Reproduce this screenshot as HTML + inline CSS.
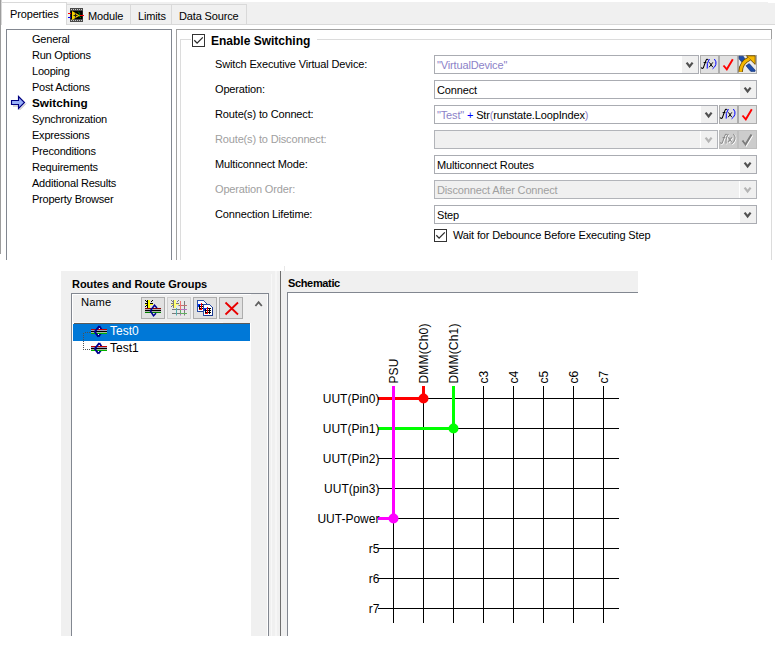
<!DOCTYPE html>
<html><head><meta charset="utf-8">
<style>
*{box-sizing:border-box;margin:0;padding:0}
html,body{width:775px;height:647px;overflow:hidden;background:#fff}
body{position:relative;font-family:"Liberation Sans",sans-serif;font-size:11px;color:#000;letter-spacing:-0.15px}
.a{position:absolute}
.t{position:absolute;white-space:nowrap;line-height:16px;height:16px}
.b{font-weight:bold}
.hl{position:absolute;background:#d9d9d9}
.cb{position:absolute;border:1px solid #aaacb2;background:#fff}
.dd{position:absolute;top:0;bottom:0;right:0;width:16px;background:#f0f0f0}
.chev{position:absolute;left:4px;top:5px}
.btn{position:absolute;border:1px solid #adadad;background:#e1e1e1;width:19px;height:19px}
.sl{font-size:12px;letter-spacing:0}
.chk{position:absolute;width:13px;height:13px;border:1px solid #333;background:#fff}
</style></head><body>

<!-- left edge line -->
<div class="a" style="left:0;top:0;width:1px;height:254px;background:#9d9d9d"></div>
<div class="a" style="left:1px;top:0;width:1px;height:254px;background:#d4d4d4"></div>

<!-- tab strip -->
<div class="a" style="left:1px;top:2px;width:774px;height:23px;background:#f0f0f0"></div>
<div class="a" style="left:1px;top:24px;width:774px;height:1px;background:#d9d9d9"></div>
<div class="a" style="left:768px;top:2px;width:7px;height:1px;background:#fff"></div>
<!-- inactive tabs -->
<div class="a" style="left:66px;top:4px;width:181px;height:21px;border:1px solid #d9d9d9;background:#f0f0f0"></div>
<div class="a" style="left:130px;top:4px;width:1px;height:20px;background:#d9d9d9"></div>
<div class="a" style="left:171px;top:4px;width:1px;height:20px;background:#d9d9d9"></div>
<!-- active tab -->
<div class="a" style="left:1px;top:2px;width:66px;height:24px;border:1px solid #d9d9d9;border-bottom:none;background:#fff"></div>
<div class="t" style="left:10px;top:6px">Properties</div>
<div class="t" style="left:88px;top:8px">Module</div>
<div class="t" style="left:138px;top:8px">Limits</div>
<div class="t" style="left:179px;top:8px">Data Source</div>

<!-- tab page white -->
<div class="a" style="left:1px;top:25px;width:774px;height:235px;background:#fff"></div>

<!-- left list box -->
<div class="a" style="left:6px;top:29px;width:166px;height:231px;border:1px solid #828790;border-bottom:none"></div>
<div class="t" style="left:32px;top:31px;letter-spacing:-0.22px">General</div>
<div class="t" style="left:32px;top:47px;letter-spacing:-0.22px">Run Options</div>
<div class="t" style="left:32px;top:63px;letter-spacing:-0.22px">Looping</div>
<div class="t" style="left:32px;top:79px;letter-spacing:-0.22px">Post Actions</div>
<div class="t b" style="left:32px;top:95px;font-size:11.8px;letter-spacing:0">Switching</div>
<div class="t" style="left:32px;top:111px;letter-spacing:-0.22px">Synchronization</div>
<div class="t" style="left:32px;top:127px;letter-spacing:-0.22px">Expressions</div>
<div class="t" style="left:32px;top:143px;letter-spacing:-0.22px">Preconditions</div>
<div class="t" style="left:32px;top:159px;letter-spacing:-0.22px">Requirements</div>
<div class="t" style="left:32px;top:175px;letter-spacing:-0.22px">Additional Results</div>
<div class="t" style="left:32px;top:191px;letter-spacing:-0.22px">Property Browser</div>

<!-- right panel -->
<div class="a" style="left:176px;top:29px;width:596px;height:231px;border:1px solid #a0a0a0;border-bottom:none"></div>
<div class="a" style="left:180px;top:39px;width:592px;height:221px;border:1px solid #dcdcdc;border-bottom:none"></div>
<div class="a" style="left:191px;top:33px;width:126px;height:14px;background:#fff"></div>
<div class="chk" style="left:192px;top:34px"></div>
<div class="t b" style="left:211px;top:33px;font-size:12px;letter-spacing:0">Enable Switching</div>

<div class="t" style="left:215px;top:56px">Switch Executive Virtual Device:</div>
<div class="t" style="left:215px;top:81px">Operation:</div>
<div class="t" style="left:215px;top:106px">Route(s) to Connect:</div>
<div class="t" style="left:215px;top:131px;color:#a0a0a0">Route(s) to Disconnect:</div>
<div class="t" style="left:215px;top:156px">Multiconnect Mode:</div>
<div class="t" style="left:215px;top:181px;color:#a0a0a0">Operation Order:</div>
<div class="t" style="left:215px;top:206px">Connection Lifetime:</div>

<!-- combos -->
<div class="cb" style="left:434px;top:55px;width:265px;height:19px"><div class="dd"></div><div class="t" style="left:2px;top:1px;color:#8c82c8">"VirtualDevice"</div></div>
<div class="cb" style="left:434px;top:80px;width:323px;height:19px"><div class="dd"></div><div class="t" style="left:2px;top:1px">Connect</div></div>
<div class="cb" style="left:434px;top:105px;width:284px;height:19px"><div class="dd"></div><div class="t" style="left:2px;top:1px"><span style="color:#8c82c8">"Test"</span> <span style="color:#0000ff">+</span> Str<span style="color:#8c82c8">(</span>runstate.LoopIndex<span style="color:#8c82c8">)</span></div></div>
<div class="cb" style="left:434px;top:130px;width:284px;height:19px;background:#f0f0f0;border-color:#b2b4b9"><div class="dd" style="background:#f0f0f0;border-left:1px solid #fff;width:17px"></div></div>
<div class="cb" style="left:434px;top:155px;width:323px;height:19px"><div class="dd"></div><div class="t" style="left:2px;top:1px">Multiconnect Routes</div></div>
<div class="cb" style="left:434px;top:180px;width:323px;height:19px;background:#f0f0f0;border-color:#b2b4b9"><div class="dd" style="background:#f0f0f0;border-left:1px solid #fff;width:17px"></div><div class="t" style="left:2px;top:1px;color:#a0a0a0">Disconnect After Connect</div></div>
<div class="cb" style="left:434px;top:205px;width:323px;height:19px"><div class="dd"></div><div class="t" style="left:2px;top:1px">Step</div></div>

<div class="btn" style="left:700px;top:55px"></div>
<div class="btn" style="left:719px;top:55px"></div>
<div class="btn" style="left:738px;top:55px"></div>
<div class="btn" style="left:719px;top:105px"></div>
<div class="btn" style="left:738px;top:105px"></div>
<div class="btn" style="left:719px;top:130px;background:#ccc;border-color:#bfbfbf"></div>
<div class="btn" style="left:738px;top:130px;background:#ccc;border-color:#bfbfbf"></div>

<div class="chk" style="left:434px;top:229px"></div>
<div class="t" style="left:453px;top:227px">Wait for Debounce Before Executing Step</div>

<!-- ============ bottom ============ -->
<div class="a" style="left:61px;top:271px;width:577px;height:365px;background:#f0f0f0"></div>
<div class="t b" style="left:72px;top:276px;letter-spacing:-0.05px">Routes and Route Groups</div>
<div class="a" style="left:71px;top:293px;width:198px;height:343px;border:1px solid #828790;border-bottom:none;background:#fff"></div>
<div class="a" style="left:73px;top:295px;width:178px;height:28px;background:#f0f0f0"></div>
<div class="a" style="left:251px;top:294px;width:16px;height:342px;background:#f0f0f0"></div>
<div class="t" style="left:81px;top:294px;font-size:11.2px;letter-spacing:0.1px">Name</div>
<div class="btn" style="left:141px;top:297px;width:24px;height:22px"></div>
<div class="btn" style="left:167px;top:297px;width:24px;height:22px;background:#e8e8e8;border-color:#cfcfcf"></div>
<div class="btn" style="left:193px;top:297px;width:24px;height:22px"></div>
<div class="btn" style="left:219px;top:297px;width:24px;height:22px"></div>
<div class="a" style="left:73px;top:322px;width:150px;height:1px;background:#fafafa"></div>
<div class="a" style="left:74px;top:323px;width:176px;height:1px;background:#5a5a5a"></div>
<div class="a" style="left:73px;top:324px;width:177px;height:17px;background:#0078d7"></div>
<div class="t" style="left:110px;top:323px;color:#fff;font-size:12px;letter-spacing:0">Test0</div>
<div class="t" style="left:110px;top:340px;font-size:12px;letter-spacing:0">Test1</div>

<div class="a" style="left:268px;top:293px;width:1px;height:343px;background:#828790"></div>
<div class="a" style="left:280px;top:271px;width:1px;height:365px;background:#828790"></div>
<div class="a" style="left:281px;top:271px;width:357px;height:365px;background:#f0f0f0"></div>
<div class="t b" style="left:288px;top:275px;letter-spacing:-0.35px">Schematic</div>
<div class="a" style="left:284px;top:266px;width:1px;height:5px;background:#e8e8e8"></div>
<div class="a" style="left:271px;top:274px;width:1px;height:362px;background:#f8f8f8"></div>
<div class="a" style="left:275px;top:271px;width:2px;height:365px;background:#f6f6f6"></div>
<div class="a" style="left:280px;top:271px;width:1px;height:365px;background:#6f6f6f"></div>
<div class="a" style="left:287px;top:292px;width:351px;height:344px;border-left:1px solid #828790;border-top:1px solid #828790;background:#fff"></div>

<svg class="a" style="left:0;top:0" width="775" height="647" shape-rendering="crispEdges">
<line x1="393.5" y1="386" x2="393.5" y2="623" stroke="#000" stroke-width="1"/>
<line x1="423.5" y1="386" x2="423.5" y2="623" stroke="#000" stroke-width="1"/>
<line x1="453.5" y1="386" x2="453.5" y2="623" stroke="#000" stroke-width="1"/>
<line x1="483.5" y1="386" x2="483.5" y2="623" stroke="#000" stroke-width="1"/>
<line x1="513.5" y1="386" x2="513.5" y2="623" stroke="#000" stroke-width="1"/>
<line x1="543.5" y1="386" x2="543.5" y2="623" stroke="#000" stroke-width="1"/>
<line x1="573.5" y1="386" x2="573.5" y2="623" stroke="#000" stroke-width="1"/>
<line x1="603.5" y1="386" x2="603.5" y2="623" stroke="#000" stroke-width="1"/>
<line x1="378" y1="398.5" x2="619" y2="398.5" stroke="#000" stroke-width="1"/>
<line x1="378" y1="428.5" x2="619" y2="428.5" stroke="#000" stroke-width="1"/>
<line x1="378" y1="458.5" x2="619" y2="458.5" stroke="#000" stroke-width="1"/>
<line x1="378" y1="488.5" x2="619" y2="488.5" stroke="#000" stroke-width="1"/>
<line x1="378" y1="518.5" x2="619" y2="518.5" stroke="#000" stroke-width="1"/>
<line x1="378" y1="548.5" x2="619" y2="548.5" stroke="#000" stroke-width="1"/>
<line x1="378" y1="578.5" x2="619" y2="578.5" stroke="#000" stroke-width="1"/>
<line x1="378" y1="608.5" x2="619" y2="608.5" stroke="#000" stroke-width="1"/>
</svg>
<svg class="a" style="left:0;top:0" width="775" height="647">
<path d="M378 398.5H423.5V386" fill="none" stroke="#ff0000" stroke-width="3" shape-rendering="crispEdges"/>
<path d="M378 428.5H453.5V386" fill="none" stroke="#00ff00" stroke-width="3" shape-rendering="crispEdges"/>
<path d="M378 518.5H393.5V386" fill="none" stroke="#ff00ff" stroke-width="3" shape-rendering="crispEdges"/>
<circle cx="423.5" cy="398.5" r="5" fill="#ff0000"/>
<circle cx="453.5" cy="428.5" r="5" fill="#00ff00"/>
<circle cx="393.5" cy="518.5" r="5" fill="#ff00ff"/>
<text transform="translate(398.2 383.6) rotate(-90)" font-size="12" letter-spacing="0.2">PSU</text>
<text transform="translate(428.2 383.6) rotate(-90)" font-size="12" letter-spacing="0.2">DMM(Ch0)</text>
<text transform="translate(458.2 383.6) rotate(-90)" font-size="12" letter-spacing="0.2">DMM(Ch1)</text>
<text transform="translate(488.2 383.6) rotate(-90)" font-size="12" letter-spacing="0.2">c3</text>
<text transform="translate(518.2 383.6) rotate(-90)" font-size="12" letter-spacing="0.2">c4</text>
<text transform="translate(548.2 383.6) rotate(-90)" font-size="12" letter-spacing="0.2">c5</text>
<text transform="translate(578.2 383.6) rotate(-90)" font-size="12" letter-spacing="0.2">c6</text>
<text transform="translate(608.2 383.6) rotate(-90)" font-size="12" letter-spacing="0.2">c7</text>
</svg>
<div class="t sl" style="right:395.6px;top:390.8px">UUT(Pin0)</div>
<div class="t sl" style="right:395.6px;top:420.8px">UUT(Pin1)</div>
<div class="t sl" style="right:395.6px;top:450.8px">UUT(Pin2)</div>
<div class="t sl" style="right:395.6px;top:480.8px">UUT(pin3)</div>
<div class="t sl" style="right:395.6px;top:510.8px">UUT-Power</div>
<div class="t sl" style="right:395.6px;top:540.8px">r5</div>
<div class="t sl" style="right:395.6px;top:570.8px">r6</div>
<div class="t sl" style="right:395.6px;top:600.8px">r7</div>

<svg class="a" style="left:0;top:0" width="775" height="647">
<!-- module tab icon -->
<g>
<rect x="70" y="8" width="13" height="14" fill="#4a4a4a"/>
<rect x="70.5" y="11" width="12" height="8" fill="#000"/>
<g fill="#c8c8c8"><rect x="71" y="9" width="1" height="1"/><rect x="73" y="9" width="1" height="1"/><rect x="75" y="9" width="1" height="1"/><rect x="77" y="9" width="1" height="1"/><rect x="79" y="9" width="1" height="1"/><rect x="81" y="9" width="1" height="1"/>
<rect x="71" y="20" width="1" height="1"/><rect x="73" y="20" width="1" height="1"/><rect x="75" y="20" width="1" height="1"/><rect x="77" y="20" width="1" height="1"/><rect x="79" y="20" width="1" height="1"/><rect x="81" y="20" width="1" height="1"/></g>
<path d="M78 11.5l2 2.5-1 2 2 2" stroke="#008000" fill="none" stroke-width="1"/>
<path d="M72 11V20L80 15.5Z" fill="#f4d000"/>
<path d="M75.5 13.5v4M73.5 15.5h4" stroke="#222" stroke-width="1.2"/>
<path d="M68 13.5h3" stroke="#f00" stroke-width="1"/>
<path d="M68 17.5h3" stroke="#00f" stroke-width="1"/>
<path d="M80 15.5h4" stroke="#f00" stroke-width="1"/>
</g>
<!-- switching arrow -->
<path d="M12.5 105.5H19V104.5M19 109.5L25.5 103" stroke="#808080" stroke-width="1" fill="none" opacity="0.6" transform="translate(0.5 0.5)"/>
<path d="M11.5 100.5H18.5V96.5L24.5 102.5L18.5 108.5V104.5H11.5Z" fill="#98b0f8" stroke="#000080" stroke-width="1.15" stroke-linejoin="miter"/>
<!-- fx button row1 -->
<g>
<path d="M701.2 67.4Q702 69.4 703.4 67.6L706 60.4Q706.8 58.6 708.2 59.6" stroke="#000" stroke-width="1.1" fill="none"/>
<path d="M703.6 62.6H706.4" stroke="#000" stroke-width="1"/>
<path d="M709.4 59Q706.4 63.2 707.2 68.6" stroke="#0000ff" stroke-width="1" fill="none"/>
<path d="M709.4 62.4L712.8 67.2M712.8 62.4L709.2 67.2" stroke="#000" stroke-width="1"/>
<path d="M714.4 59Q716.8 61.8 715.8 64.6Q715 67.2 712.6 68.8" stroke="#0000ff" stroke-width="1" fill="none"/>
</g>
<g transform="translate(19 50)">
<path d="M701.2 67.4Q702 69.4 703.4 67.6L706 60.4Q706.8 58.6 708.2 59.6" stroke="#000" stroke-width="1.1" fill="none"/>
<path d="M703.6 62.6H706.4" stroke="#000" stroke-width="1"/>
<path d="M709.4 59Q706.4 63.2 707.2 68.6" stroke="#0000ff" stroke-width="1" fill="none"/>
<path d="M709.4 62.4L712.8 67.2M712.8 62.4L709.2 67.2" stroke="#000" stroke-width="1"/>
<path d="M714.4 59Q716.8 61.8 715.8 64.6Q715 67.2 712.6 68.8" stroke="#0000ff" stroke-width="1" fill="none"/>
</g>
<!-- red checks -->
<path d="M723.5 65.5L726.8 69.3L732.8 59.2" stroke="#ff0000" stroke-width="1.9" fill="none"/>
<path d="M742.5 115.5L745.8 119.3L751.8 109.2" stroke="#ff0000" stroke-width="1.9" fill="none"/>
<!-- wizard icon -->
<g>
<rect x="739" y="56" width="17" height="17" fill="#eaeaea"/>
<path d="M739 56.2L743.2 56.2L745.8 60.2L742.2 62.6L739.2 59Z" fill="#1f4da8" stroke="#0a2a70" stroke-width="0.6"/>
<path d="M746 65.8L749.2 63.6L755.2 70.2L755 71.4L750.8 71.4Z" fill="#1f4da8" stroke="#0a2a70" stroke-width="0.6"/>
<path d="M740.6 71.8A15 15 0 0 1 749.6 58.6" stroke="#6a4800" stroke-width="4.4" fill="none"/>
<path d="M746.4 55.8L755.2 55.8L755.2 64.4Z" fill="#f6b800" stroke="#6a4800" stroke-width="0.9" stroke-linejoin="round"/>
<path d="M740.6 71.8A15 15 0 0 1 749.6 58.6" stroke="#f6b800" stroke-width="2.8" fill="none"/>
</g>
<!-- disabled fx / check -->
<g fill="none">
<path d="M701.2 67.4Q702 69.4 703.4 67.6L706 60.4Q706.8 58.6 708.2 59.6M703.6 62.6H706.4M709.4 59Q706.4 63.2 707.2 68.6M709.4 62.4L712.8 67.2M712.8 62.4L709.2 67.2M714.4 59Q716.8 61.8 715.8 64.6Q715 67.2 712.6 68.8" stroke="#fff" stroke-width="1.1" transform="translate(19.7 75.7)"/>
<path d="M701.2 67.4Q702 69.4 703.4 67.6L706 60.4Q706.8 58.6 708.2 59.6M703.6 62.6H706.4M709.4 59Q706.4 63.2 707.2 68.6M709.4 62.4L712.8 67.2M712.8 62.4L709.2 67.2M714.4 59Q716.8 61.8 715.8 64.6Q715 67.2 712.6 68.8" stroke="#8c8c8c" stroke-width="1.1" transform="translate(19 75)"/>
<path d="M742.5 140.5L745.5 144.5L751.5 134.5" stroke="#fff" stroke-width="2" transform="translate(0.8 0.8)"/>
<path d="M742.5 140.5L745.5 144.5L751.5 134.5" stroke="#7c7c7c" stroke-width="2"/>
</g>
<!-- combo chevrons -->
<g fill="none" stroke="#505050" stroke-width="2.2">
<path d="M686.6 62.6L689.6 66.4L692.6 62.6"/>
<path d="M744.6 87.6L747.6 91.4L750.6 87.6"/>
<path d="M705.6 112.6L708.6 116.4L711.6 112.6"/>
<path d="M744.6 162.6L747.6 166.4L750.6 162.6"/>
<path d="M744.6 212.6L747.6 216.4L750.6 212.6"/>
</g>
<g fill="none" stroke="#b4b4b4" stroke-width="2.2">
<path d="M705.6 137.6L708.6 141.4L711.6 137.6"/>
<path d="M744.6 187.6L747.6 191.4L750.6 187.6"/>
</g>
<!-- check marks in checkboxes -->
<path d="M194.3 40.3L197.1 43.1L202.8 37.4" stroke="#2a2a2a" stroke-width="1.3" fill="none"/>
<path d="M436.3 235.3L439.1 238.1L444.8 232.4" stroke="#2a2a2a" stroke-width="1.3" fill="none"/>
<!-- scrollbar up chevron -->
<path d="M255.4 306L258.6 302.2L261.8 306" stroke="#606060" stroke-width="1.8" fill="none"/>
<!-- toolbar button 1: add route -->
<g shape-rendering="crispEdges">
<rect x="148" y="300" width="2" height="8" fill="#ffff00"/>
<rect x="145" y="303" width="8" height="2" fill="#ffff00"/>
<rect x="147" y="300" width="1" height="8" fill="#000"/>
<rect x="145" y="303" width="2" height="1" fill="#000"/>
<rect x="150" y="303" width="3" height="1" fill="#000"/>
<rect x="145" y="300" width="1" height="1" fill="#000"/><rect x="146" y="301" width="1" height="1" fill="#000"/>
<rect x="152" y="300" width="1" height="1" fill="#000"/><rect x="151" y="301" width="1" height="1" fill="#000"/>
<rect x="145" y="306" width="1" height="1" fill="#000"/><rect x="146" y="305" width="1" height="1" fill="#000"/>
<rect x="145" y="308" width="16" height="1" fill="#8b0000"/>
<rect x="145" y="309" width="16" height="1" fill="#b0b0b0"/>
<rect x="145" y="310" width="16" height="1" fill="#000"/>
<rect x="145" y="311" width="16" height="1" fill="#b0b0b0"/>
<rect x="145" y="312" width="16" height="1" fill="#008000"/>
</g>
<path d="M157 308L154.5 305.2L150.3 310.7L153.5 315.8L156 313.2" stroke="#000090" stroke-width="1.5" fill="none"/>
<!-- toolbar button 2: disabled grid -->
<g stroke-width="1">
<g shape-rendering="crispEdges">
<rect x="174" y="300" width="2" height="8" fill="#ffff70"/>
<rect x="171" y="303" width="8" height="2" fill="#ffff70"/>
<rect x="173" y="300" width="1" height="8" fill="#7a7a7a"/>
<rect x="171" y="303" width="2" height="1" fill="#7a7a7a"/>
<rect x="176" y="303" width="3" height="1" fill="#7a7a7a"/>
<rect x="171" y="300" width="1" height="1" fill="#7a7a7a"/><rect x="172" y="301" width="1" height="1" fill="#7a7a7a"/>
<rect x="178" y="300" width="1" height="1" fill="#7a7a7a"/><rect x="177" y="301" width="1" height="1" fill="#7a7a7a"/>
<rect x="171" y="306" width="1" height="1" fill="#7a7a7a"/><rect x="172" y="305" width="1" height="1" fill="#7a7a7a"/>
</g>
<path d="M184.5 301v14.5M178.5 305.5h8.5M172 309.5h8M172 313.5h8" stroke="#7a7a7a"/>
<path d="M180.5 301v9" stroke="#f07070"/>
<path d="M181 305.5h6" stroke="#c07070"/>
<path d="M180.5 310v5.5M181 309.5h6" stroke="#b070c0"/>
<path d="M176.5 308v7.5" stroke="#50b0b0"/>
<path d="M180.5 313.5h6.5M180.5 310v3.5" stroke="#60b060"/>
</g>
<!-- toolbar button 3: copy -->
<g shape-rendering="crispEdges">
<path d="M197.5 300.5h6l2.5 2.5v8.5h-8.5Z" fill="#fff" stroke="#2a4fa8" stroke-width="1"/>
<path d="M198.5 311.5h8M206.5 303v8.5" stroke="#1a3a90" stroke-width="1"/>
<rect x="199" y="304" width="2" height="1" fill="#000"/>
<rect x="199" y="305" width="1" height="1" fill="#000"/>
<rect x="201" y="304" width="2" height="1" fill="#000"/>
<rect x="201" y="305" width="1" height="1" fill="#000"/>
<rect x="203" y="304" width="2" height="1" fill="#000"/>
<rect x="203" y="305" width="1" height="1" fill="#000"/>
<rect x="199" y="306" width="2" height="1" fill="#000"/>
<rect x="199" y="307" width="1" height="1" fill="#000"/>
<rect x="201" y="306" width="2" height="1" fill="#000"/>
<rect x="201" y="307" width="1" height="1" fill="#000"/>
<rect x="203" y="306" width="2" height="1" fill="#000"/>
<rect x="203" y="307" width="1" height="1" fill="#000"/>
<rect x="199" y="308" width="2" height="1" fill="#000"/>
<rect x="199" y="309" width="1" height="1" fill="#000"/>
<rect x="201" y="308" width="2" height="1" fill="#000"/>
<rect x="201" y="309" width="1" height="1" fill="#000"/>
<rect x="203" y="308" width="2" height="1" fill="#000"/>
<rect x="203" y="309" width="1" height="1" fill="#000"/>
<rect x="199" y="304" width="3" height="1" fill="#0030ff"/>
<rect x="198" y="304" width="1" height="3" fill="#0030ff"/>
<rect x="201" y="303" width="1" height="7" fill="#f00000"/>
<rect x="199" y="309" width="3" height="1" fill="#f00000"/>
<path d="M203.5 304.5h6l2.5 2.5v8.5h-8.5Z" fill="#fff" stroke="#2a4fa8" stroke-width="1"/>
<path d="M204.5 315.5h8M212.5 307v8.5" stroke="#1a3a90" stroke-width="1"/>
<rect x="205" y="308" width="2" height="1" fill="#000"/>
<rect x="205" y="309" width="1" height="1" fill="#000"/>
<rect x="207" y="308" width="2" height="1" fill="#000"/>
<rect x="207" y="309" width="1" height="1" fill="#000"/>
<rect x="209" y="308" width="2" height="1" fill="#000"/>
<rect x="209" y="309" width="1" height="1" fill="#000"/>
<rect x="205" y="310" width="2" height="1" fill="#000"/>
<rect x="205" y="311" width="1" height="1" fill="#000"/>
<rect x="207" y="310" width="2" height="1" fill="#000"/>
<rect x="207" y="311" width="1" height="1" fill="#000"/>
<rect x="209" y="310" width="2" height="1" fill="#000"/>
<rect x="209" y="311" width="1" height="1" fill="#000"/>
<rect x="205" y="312" width="2" height="1" fill="#000"/>
<rect x="205" y="313" width="1" height="1" fill="#000"/>
<rect x="207" y="312" width="2" height="1" fill="#000"/>
<rect x="207" y="313" width="1" height="1" fill="#000"/>
<rect x="209" y="312" width="2" height="1" fill="#000"/>
<rect x="209" y="313" width="1" height="1" fill="#000"/>
<rect x="205" y="308" width="3" height="1" fill="#0030ff"/>
<rect x="204" y="308" width="1" height="3" fill="#0030ff"/>
<rect x="207" y="307" width="1" height="7" fill="#f00000"/>
<rect x="205" y="313" width="3" height="1" fill="#f00000"/>
</g>
<!-- toolbar button 4: red X -->
<path d="M225.5 302.5L238 314.5M238 302.5L225.5 314.5" stroke="#e80000" stroke-width="1.8"/>
<!-- tree lines -->
<g fill="#505050">
<rect x="83" y="333" width="1" height="1"/><rect x="83" y="335" width="1" height="1"/><rect x="83" y="337" width="1" height="1"/><rect x="83" y="339" width="1" height="1"/><rect x="83" y="341" width="1" height="1"/><rect x="83" y="343" width="1" height="1"/><rect x="83" y="345" width="1" height="1"/><rect x="83" y="347" width="1" height="1"/><rect x="83" y="349" width="1" height="1"/>
<rect x="85" y="332" width="1" height="1"/><rect x="87" y="332" width="1" height="1"/><rect x="89" y="332" width="1" height="1"/>
<rect x="85" y="349" width="1" height="1"/><rect x="87" y="349" width="1" height="1"/><rect x="89" y="349" width="1" height="1"/>
</g>
<!-- tree route icons -->
<g transform="translate(0 0)">
<path d="M99.3 326L102.6 331.3L98.4 336.6" stroke="#000090" stroke-width="1.8" fill="none"/>
<path d="M91 329.5h16" stroke="#c00000" stroke-width="1"/>
<path d="M91 330.5h16" stroke="#a0a0c0" stroke-width="1"/>
<path d="M91 331.5h16" stroke="#000" stroke-width="1"/>
<path d="M91 332.5h16" stroke="#a0c0a0" stroke-width="1"/>
<path d="M91 333.5h16" stroke="#00b000" stroke-width="1"/>
<path d="M99.3 326L94.8 331.7L98.4 336.6" stroke="#000090" stroke-width="1.9" fill="none"/>
<rect x="99" y="328" width="1" height="1" fill="#fff"/><rect x="98" y="334" width="1" height="1" fill="#fff"/>
</g>
<g transform="translate(0 17)">
<path d="M99.3 326L102.6 331.3L98.4 336.6" stroke="#000090" stroke-width="1.8" fill="none"/>
<path d="M91 329.5h16" stroke="#c00000" stroke-width="1"/>
<path d="M91 330.5h16" stroke="#a0a0c0" stroke-width="1"/>
<path d="M91 331.5h16" stroke="#000" stroke-width="1"/>
<path d="M91 332.5h16" stroke="#a0c0a0" stroke-width="1"/>
<path d="M91 333.5h16" stroke="#00b000" stroke-width="1"/>
<path d="M99.3 326L94.8 331.7L98.4 336.6" stroke="#000090" stroke-width="1.9" fill="none"/>
<rect x="99" y="328" width="1" height="1" fill="#fff"/><rect x="98" y="334" width="1" height="1" fill="#fff"/>
</g>
</svg>

</body></html>
